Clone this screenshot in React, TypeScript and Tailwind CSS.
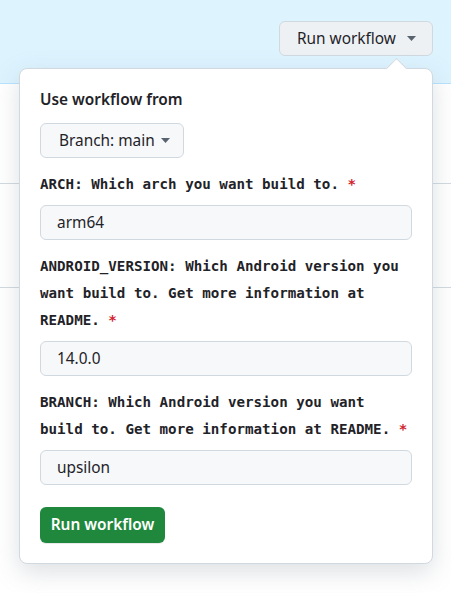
import React from "react";

const sans = "font-['Noto_Sans',sans-serif]";
const mono = "font-['DejaVu_Sans_Mono',monospace]";

function Caret() {
  return (
    <svg width="9" height="5" viewBox="0 0 9 5" className="shrink-0">
      <path d="M0 0h9L4.5 5z" fill="#59636e" />
    </svg>
  );
}

function Field({
  label,
  value,
}: {
  label: string;
  value: string;
}) {
  return (
    <div className="mt-[13px]">
      <div
        className={`${mono} mb-[7px] text-[14.2px] font-bold leading-[27px] text-[#1f2328]`}
      >
        {label} <span className="text-[#d1242f]">*</span>
      </div>
      <div
        className={`${sans} flex h-[35px] items-center rounded-[6px] border border-[#d1d9e0] bg-[#f6f8fa] px-[16px] text-[15.4px] text-[#1f2328]`}
      >
        {value}
      </div>
    </div>
  );
}

export default function App() {
  return (
    <div className={`${sans} relative h-[593px] w-full overflow-hidden bg-white`}>
      {/* page header band */}
      <div className="flex h-[84px] justify-end border-b border-[#b6e3ff] bg-[#ddf4ff] pr-[18px] pt-[21px]">
        <div className="flex h-[35px] w-[154px] items-center gap-[11px] rounded-[6px] border border-[#d1d9e0] bg-[#eef1f4] pl-[17px] text-[15.4px] text-[#1f2328]">
          <span>Run workflow</span>
          <Caret />
        </div>
      </div>

      {/* rows behind the menu */}
      <div className="h-[100px] border-b border-[#d1d9e0]" />
      <div className="h-[104px] border-b border-[#d1d9e0]" />

      {/* dropdown */}
      <div className="absolute left-[19px] top-[68px] w-[414px] rounded-[8px] border border-[#d1d9e0] bg-white px-[20px] pb-[20px] pt-[19px] shadow-[0_8px_24px_rgba(140,149,159,0.3)]">
        <div className="absolute left-[369px] top-[-8px] h-[15px] w-[15px] rotate-45 border-l border-t border-[#d1d9e0] bg-white" />

        <div className="text-[15.4px] font-semibold leading-[24px] text-[#1f2328]">
          Use workflow from
        </div>

        <div className="mt-[11px] flex h-[35px] w-[144px] items-center gap-[6px] rounded-[6px] border border-[#d1d9e0] bg-[#f6f8fa] pl-[18px] text-[15.4px] text-[#1f2328]">
          <span>Branch: main</span>
          <Caret />
        </div>

        <Field label="ARCH: Which arch you want build to." value="arm64" />
        <Field
          label="ANDROID_VERSION: Which Android version you want build to. Get more information at README."
          value="14.0.0"
        />
        <Field
          label="BRANCH: Which Android version you want build to. Get more information at README."
          value="upsilon"
        />

        <button className="mt-[22px] flex h-[36px] w-[125px] items-center justify-center rounded-[6px] bg-[#1f883d] text-[15.4px] font-semibold text-white shadow-[0_1px_0_rgba(31,35,40,0.1)]">
          Run workflow
        </button>
      </div>
    </div>
  );
}
